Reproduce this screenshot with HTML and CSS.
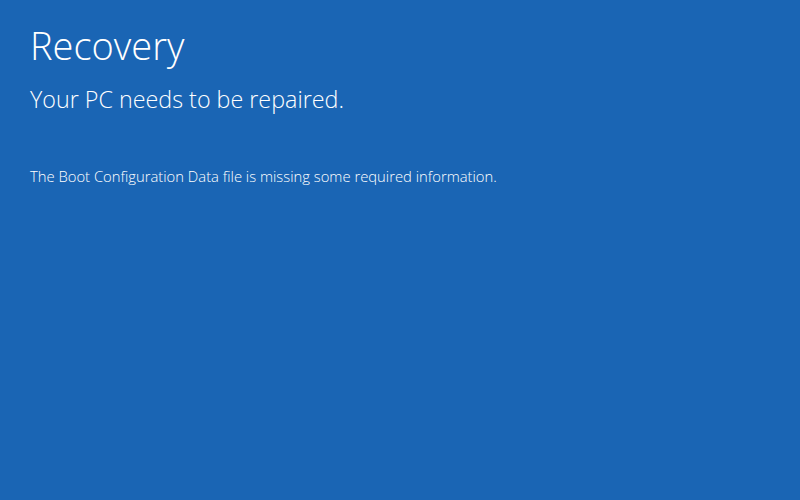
FILE: index.html
```html
<!DOCTYPE html>
<html lang="en">
<head>
  <meta charset="UTF-8">
  <title>Recovery</title>
  <link rel="stylesheet" href="styles.css">
</head>
<body>
  <main class="screen">
    <h1 class="title">Recovery</h1>
    <h2 class="subtitle">Your PC needs to be repaired.</h2>
    <p class="message">The Boot Configuration Data file is missing some required information.</p>
  </main>
</body>
</html>
```

FILE: styles.css
```css
html, body {
  margin: 0;
  padding: 0;
  height: 100%;
}
body {
  background-color: #1a65b4;
  color: #fff;
  font-family: "Open Sans", "Noto Sans", sans-serif;
  font-weight: 300;
}
.screen {
  padding: 22px 30px;
}
.title {
  font-size: 38px;
  font-weight: 300;
  line-height: 46px;
  margin: 0;
}
.subtitle {
  font-size: 23.3px;
  font-weight: 300;
  line-height: 30px;
  margin: 16px 0 0;
}
.message {
  font-size: 14.8px;
  line-height: 20px;
  margin: 52px 0 0;
}
```
